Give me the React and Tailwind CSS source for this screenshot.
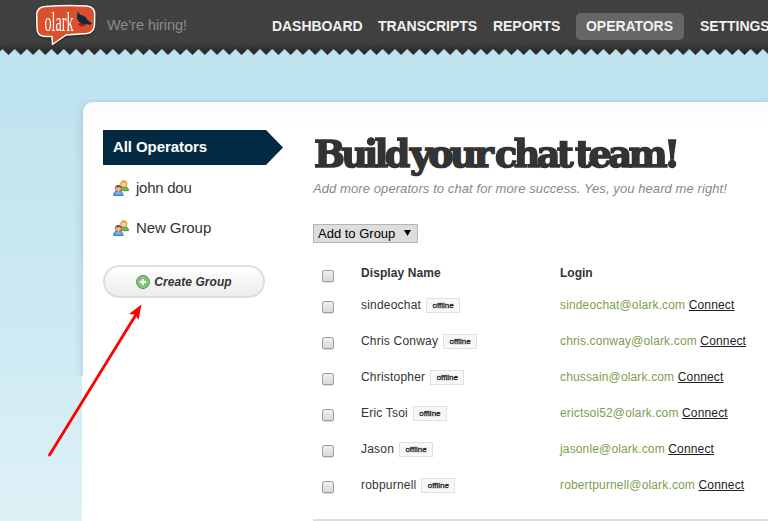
const ROWS = [
  ['sindeochat', 'sindeochat@olark.com'],
  ['Chris Conway', 'chris.conway@olark.com'],
  ['Christopher', 'chussain@olark.com'],
  ['Eric Tsoi', 'erictsoi52@olark.com'],
  ['Jason', 'jasonle@olark.com'],
  ['robpurnell', 'robertpurnell@olark.com'],
];

function Logo() {
  return (
    <svg className="block overflow-visible drop-shadow-[0_1px_1px_#111a]" width="64" height="44" viewBox="0 0 64 44">
      <path
        d="M11 2.500Q32 1 53 2Q60.700 3 60.700 10L60.500 21Q60 28.500 53 29.500L32 31L18.500 40.500L18 32.500H11Q3 32 3 24.500L2.700 10Q3.500 3 11 2.500Z"
        fill="#d9512c" stroke="#fff" strokeWidth="1.500" strokeLinejoin="round"
      />
      <text x="10.500" y="26.500" textLength="29" lengthAdjust="spacingAndGlyphs" fontSize="28" fill="#fff" fontFamily="Liberation Serif, serif">olark</text>
      <path d="M43 20.500Q47 17.500 52 19.500Q52 22 47 22.500L44 22L47.500 21Z" fill="#a5191c" />
      <path d="M43.500 7.500L46.500 11Q52 11.500 53 15.500L57.500 19.300L56.500 20.700L51 20Q43.500 19 43 13.500Z" fill="#0b2b40" />
    </svg>
  );
}

function Zigzag() {
  return (
    <svg className="absolute left-0 top-[45px] block" width="768" height="11">
      <defs>
        <linearGradient id="edge" x1="0" y1="0" x2="0" y2="1">
          <stop offset="0" stopColor="#3a3a3a" />
          <stop offset="1" stopColor="#252525" />
        </linearGradient>
        <pattern id="teeth" width="12.267" height="11" x="2.400" patternUnits="userSpaceOnUse">
          <path d="M0 0H12.267V4L6.133 10L0 4Z" fill="url(#edge)" />
        </pattern>
      </defs>
      <rect width="768" height="11" fill="url(#teeth)" />
    </svg>
  );
}

function PeopleIcon() {
  return (
    <svg className="block shrink-0" width="16" height="16" viewBox="0 0 16 16">
      <path d="M6.500 10Q7 6.500 10.500 6.500Q15.500 6.500 15.500 10.700H7Z" fill="#72b857" stroke="#438235" strokeWidth=".8" />
      <circle cx="10.800" cy="4" r="3.200" fill="#f7cf9a" stroke="#bd842a" strokeWidth=".7" />
      <path d="M7.500 4Q7.500 .5 10.800.4Q14.200.5 14.200 4L12.800 2.800L9 2.800Z" fill="#eaa424" />
      <path d="M.6 15.500Q.5 11 5.200 11Q10.200 11 10.100 15.500Z" fill="#66a9ef" stroke="#2d65b5" strokeWidth=".8" />
      <circle cx="5.400" cy="8.600" r="3" fill="#efba94" stroke="#8b4a2d" strokeWidth=".7" />
      <path d="M2.200 8.600Q2.200 5 5.400 5Q8.600 5 8.600 8.600L7.400 7.300L3.500 7.300Z" fill="#8d4529" />
      <path d="M4.500 11.500L5.300 13L6.200 11.500Z" fill="#fff" />
    </svg>
  );
}

function PlusIcon() {
  return (
    <svg className="block" width="14" height="14" viewBox="0 0 14 14">
      <circle cx="7" cy="7" r="6.400" fill="#56a94c" stroke="#3b8a3b" />
      <circle cx="7" cy="7" r="5.400" fill="#75bd67" stroke="#b9dfae" strokeWidth=".7" />
      <path d="M7 3.700V10.300M3.700 7H10.300" stroke="#fff" strokeWidth="2.300" />
    </svg>
  );
}

function Checkbox() {
  return (
    <span className="block h-3 w-3 rounded-[2px] border border-[#a0a0a0] bg-linear-to-b from-[#eeeeee] to-[#dadada] shadow-[0_1px_1px_#0002]" role="checkbox" aria-checked="false" />
  );
}

function Word({ box, text, children }) {
  return (
    <span className={'block h-[48px] ' + box}>
      <span className={'block w-max origin-left ' + text}>{children}</span>
    </span>
  );
}

export default function App() {
  return (
    <div className="h-[521px] w-[768px] overflow-hidden bg-linear-to-b from-[#c0e4ef] from-20% via-[#cdeaf3] via-62% to-[#dff1f7] font-['Liberation_Sans',Arial,sans-serif] text-[#333]">
      <header className="relative h-[102px]">
        <div className="relative flex h-[49px] bg-[#3c3c3c]">
          <svg className="absolute inset-0 opacity-[.07]" width="768" height="45">
            <filter id="grain"><feTurbulence type="fractalNoise" baseFrequency=".45" numOctaves="2" seed="4" /><feColorMatrix type="saturate" values="0" /></filter>
            <rect width="768" height="45" filter="url(#grain)" />
          </svg>
        </div>
        <div className="absolute inset-x-0 top-[45px] h-[4px] bg-[#c0e4ef]" />
        <div className="absolute inset-x-0 top-[42px] h-[3px] bg-linear-to-b from-transparent to-[#333]/40" />
        <Zigzag />
        <div className="absolute left-[34px] top-1"><Logo /></div>
        <nav className="absolute left-0 top-0 flex h-[52px] w-[790px] items-center whitespace-nowrap text-[14px] font-bold leading-4 tracking-[-0.050px] text-[#f0f0f0]">
          <span className="ml-[107px] w-[165px] pb-[3px] text-[14.500px] font-normal text-[#8b8b8b]">We're hiring!</span>
          <span className="w-[106px]">DASHBOARD</span>
          <span className="w-[115px]">TRANSCRIPTS</span>
          <span className="w-[83px]">REPORTS</span>
          <span className="mr-4 h-[27px] w-[108px] rounded-[5px] bg-[#666] px-[10px] pt-[5.500px]">OPERATORS</span>
          <span>SETTINGS</span>
        </nav>
      </header>
      <main className="relative ml-[82px] h-[419px]">
        <div className="absolute left-px right-0 top-0 h-[274px] rounded-tl-[10px] shadow-[0_2px_10px_#2b627540] [clip-path:inset(-3px_0_0_-12px)]" />
        <div className="absolute inset-x-0 bottom-0 top-[274px] bg-white" />
        <div className="relative ml-px flex h-full rounded-tl-[10px] bg-linear-to-b from-[#fbfbfb] to-white to-7%">
          <aside className="w-[230px] shrink-0 pl-5 pt-7">
            <div className="flex h-[35px] w-[180px] items-center bg-[#022b43] pl-[10px] text-[15px] font-bold tracking-[-0.080px] text-white [clip-path:polygon(0_0,163px_0,100%_50%,163px_100%,0_100%)]">All Operators</div>
            <div className="mt-1 flex h-[38px] items-center gap-[7px] pl-[10px] text-[15px] tracking-[-0.250px]"><PeopleIcon />john dou</div>
            <div className="mt-[2px] flex h-[38px] items-center gap-[7px] pl-[10px] text-[15px] tracking-[-0.080px]"><PeopleIcon />New Group</div>
            <button className="mt-[18px] flex h-[33px] w-[162px] items-center justify-center gap-1 rounded-full border-2 border-[#dedede] bg-linear-to-b from-white to-[#ececec] text-[12px] font-bold italic tracking-[0.060px]"><PlusIcon />Create Group</button>
          </aside>
          <section className="flex-1 overflow-hidden pt-7">
            <h1 className="flex h-[50px] pl-px font-['DejaVu_Serif',serif] text-[38px] font-bold leading-[48px] tracking-[-3.800px] [-webkit-text-stroke:1.600px_#333]">
              <Word box="w-[96px]" text="scale-x-[0.965]">Build</Word>
              <Word box="w-[85px]" text="scale-x-[1.000]">your</Word>
              <Word box="w-[80px]" text="scale-x-[0.965]">chat</Word>
              <Word box="w-[104px]" text="scale-x-[0.975]">team!</Word>
            </h1>
            <p className="text-[13px] italic leading-[17px] tracking-[0.086px] text-[#888]">Add more operators to chat for more success. Yes, you heard me right!</p>
            <div className="mt-[27px] flex h-[19px] w-[105px] items-center justify-between border border-[#b5b5b5] bg-[#ddd] pl-1 pr-[6px] text-[13px] text-black">Add to Group
              <svg className="-mt-[2px]" width="7" height="6"><path d="M0 0H7L3.500 6Z" /></svg>
            </div>
            <div className="mt-[17px] flex h-[27px] pl-[9px] text-[12px] font-bold leading-[26px]">
              <div className="w-[39px] pt-[10px]"><Checkbox /></div>
              <div className="w-[199px] tracking-[0.080px]">Display Name</div>
              <div>Login</div>
            </div>
            {ROWS.map(([name, email]) => (
              <div key={name} className="flex h-9 pl-[9px] text-[12px] leading-9 tracking-[0.150px]">
                <div className="w-[39px] pt-[14px]"><Checkbox /></div>
                <div className="flex w-[199px] gap-[5px] tracking-[0.200px]">{name}
                  <span className="mt-[11px] flex h-[15px] w-[34px] items-center justify-center border border-[#e0e0e0] bg-[#f7f7f7] text-[8px] leading-none tracking-normal text-[#222] [-webkit-text-stroke:0.300px_#222]">offline</span>
                </div>
                <div><span className="text-[#7d9e4b]">{email}</span> <span className="text-[#222] underline">Connect</span></div>
              </div>
            ))}
            <div className="mt-4 h-[2px] bg-[#ddd]" />
          </section>
        </div>
      </main>
      <svg className="pointer-events-none absolute left-0 top-0" width="200" height="521">
        <path d="M49.500 455L137 313" stroke="#f00" strokeWidth="2.800" strokeLinecap="round" />
        <path d="M141.500 304.500L129 314L135 314.500L138.500 320Z" fill="#f00" />
      </svg>
    </div>
  );
}
